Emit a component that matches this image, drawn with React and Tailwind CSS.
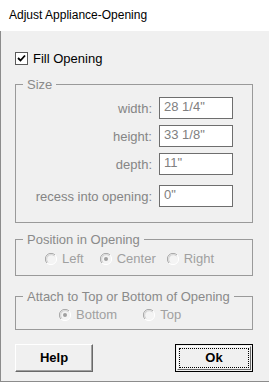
import React from 'react';

const font = { fontFamily: '"Liberation Sans", Arial, sans-serif' };

const Radio = ({ checked }) => (
  <svg width="12" height="12" viewBox="0 0 12 12" className="shrink-0">
    <circle cx="6" cy="6" r="5.5" fill="#f4f4f4" />
    <path d="M10 2 A5.5 5.5 0 0 0 2 10" fill="none" stroke="#a6a6a6" strokeWidth="1" />
    <path d="M9.5 3 A4.5 4.5 0 0 0 3 9.5" fill="none" stroke="#d0d0d0" strokeWidth="1" />
    <path d="M2 10 A5.5 5.5 0 0 0 10 2" fill="none" stroke="#ffffff" strokeWidth="1" />
    {checked && <circle cx="6" cy="6" r="2" fill="#a0a0a0" />}
  </svg>
);

const RadioOption = ({ label, checked, className = '' }) => (
  <div className={`flex items-center gap-[5px] ${className}`}>
    <Radio checked={checked} />
    <span className="text-[13px] leading-[15px] text-[#a0a0a0]">{label}</span>
  </div>
);

const Field = ({ label, value, className = '' }) => (
  <div className={`flex items-center justify-end gap-[7px] ${className}`}>
    <span className="text-[13px] leading-[15px] text-[#858585]">{label}</span>
    <div className="w-[74px] h-[22px] border border-[#6e6e6e] bg-white pl-[4px] flex items-center">
      <span className="text-[13px] leading-[15px] text-[#808080] -mt-[3px]">{value}</span>
    </div>
  </div>
);

const Group = ({ title, children, className = '' }) => (
  <fieldset className={`w-[238px] border border-[#9a9a9a] ${className}`}>
    <legend className="ml-[7px] px-[4px] text-[13px] leading-[15px] text-[#8a8a8a]">{title}</legend>
    {children}
  </fieldset>
);

export default function App() {
  return (
    <div className="w-[269px] h-[382px] flex flex-col overflow-hidden" style={font}>
      {/* Title bar */}
      <div className="h-[31px] bg-white flex items-center pl-[9px] shrink-0">
        <span className="text-[12px] text-black -mt-[1px]">Adjust Appliance-Opening</span>
      </div>

      <div className="flex-1 bg-[#f0f0f0] border-l border-b border-[#8c8c8c] pl-[14px] flex flex-col">
        {/* Fill opening */}
        <div className="flex items-center gap-[5px] mt-[20px] h-[15px]">
          <div className="w-[13px] h-[13px] border border-[#5a5a5a] bg-white flex items-center justify-center">
            <svg width="9" height="9" viewBox="0 0 9 9">
              <path d="M1 4 L3.5 6.5 L8 1.5" fill="none" stroke="#000" strokeWidth="1.8" />
            </svg>
          </div>
          <span className="text-[13px] leading-[15px] text-black">Fill Opening</span>
        </div>

        {/* Size */}
        <Group title="Size" className="mt-[11px] pt-[5px] pb-[15px] pr-[19px]">
          <Field label="width:" value={'28 1/4"'} />
          <Field label="height:" value={'33 1/8"'} className="mt-[6px]" />
          <Field label="depth:" value={'11"'} className="mt-[6px]" />
          <Field label="recess into opening:" value={'0"'} className="mt-[10px]" />
        </Group>

        {/* Position */}
        <Group title="Position in Opening" className="mt-[9px] pt-[4px] pb-[9px]">
          <div className="flex items-center pl-[29px]">
            <RadioOption label="Left" />
            <RadioOption label="Center" checked className="ml-[16px]" />
            <RadioOption label="Right" className="ml-[11px]" />
          </div>
        </Group>

        {/* Attach */}
        <Group title="Attach to Top or Bottom of Opening" className="mt-[13px] pt-[3px] pb-[7px]">
          <div className="flex items-center pl-[43px]">
            <RadioOption label="Bottom" checked />
            <RadioOption label="Top" className="ml-[26px]" />
          </div>
        </Group>

        {/* Buttons */}
        <div className="flex w-[238px] justify-between mt-[14px]">
          <button className="w-[78px] h-[28px] bg-[#f0f0f0] border border-t-white border-l-white border-r-[#696969] border-b-[#696969] shadow-[inset_-1px_-1px_0_#a0a0a0] text-[13px] font-bold text-black flex items-center justify-center">
            Help
          </button>
          <button className="w-[78px] h-[28px] bg-[#f0f0f0] border border-black p-[1px] flex">
            <div className="flex-1 border border-t-white border-l-white border-r-[#696969] border-b-[#696969] p-[1px] flex">
              <div className="flex-1 border border-dotted border-black flex items-center justify-center text-[13px] font-bold text-black">
                Ok
              </div>
            </div>
          </button>
        </div>
      </div>
    </div>
  );
}
